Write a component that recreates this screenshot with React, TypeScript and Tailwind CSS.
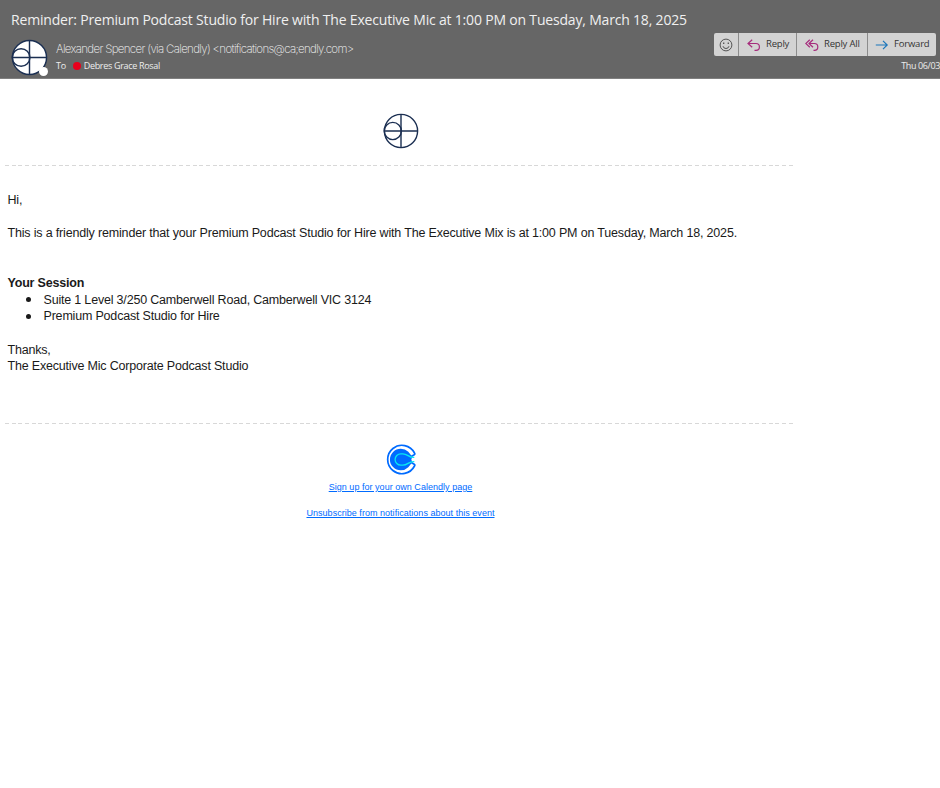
import React from "react";

interface LogoProps {
   className?: string;
   fill?: string;
}

function StudioLogo({ className, fill = "none" }: LogoProps) {
   return (
      <svg viewBox="0 0 36 36" className={className} fill="none" stroke="#1b2f52" strokeWidth="1.4">
         <circle cx="18" cy="18" r="16.6" fill={fill} />
         <circle cx="9.8" cy="18" r="8.6" />
         <path d="M18 1.5v33M1.5 18h33" />
      </svg>
   );
}

function CalendlyLogo() {
   return (
      <svg viewBox="1.2 0.5 32 32" className="size-8" fill="none">
         <path
            d="M27 13.2L30.4 11.3Q31.4 10.600 30.700 9.500A14.200 14.200 0 1 0 30.700 22.500Q31.400 21.400 30.400 20.700L27 18.800"
            stroke="#006bff"
            strokeWidth="1.700"
         />
         <path d="M24.500 8.300A10.800 10.800 0 1 0 24.500 23.700L28.500 18.800L27.500 16L28.500 13.200Z" fill="#006bff" />
         <path
            d="M30.500 13.900C25 14.500 24 10.300 19 10.300H17a5.700 5.700 0 0 0 0 11.400h2C24 21.700 25 17.500 30.500 18.100"
            stroke="#0ae8f0"
            strokeWidth="1.300"
         />
      </svg>
   );
}

function SmileIcon() {
   return (
      <svg viewBox="0 0 14 14" className="size-[14px]" fill="none" stroke="#555" strokeWidth="1">
         <circle cx="7" cy="7" r="5.9" />
         <path d="M4 8.2a3.1 3.1 0 0 0 6 0" />
         <path d="M4.700 4.500v1.400M9.300 4.500v1.400" strokeWidth="1.3" />
      </svg>
   );
}

function ReplyIcon() {
   return (
      <svg viewBox="0 0 14 12" className="h-3 w-[14px]" fill="none" stroke="#a62c7c" strokeWidth="1.2">
         <path d="M5.200 0.700L1 4.500l4.200 3.800M1 4.500h8a3.400 3.400 0 0 1 0 6.800H7.500" />
      </svg>
   );
}

function ReplyAllIcon() {
   return (
      <svg viewBox="0 0 14 12" className="h-3 w-[14px]" fill="none" stroke="#a62c7c" strokeWidth="1.2">
         <path d="M4.800 0.700L0.800 4.500l4 3.800M8 0.700L4 4.500l4 3.800M4 4.500h5.400a3.400 3.400 0 0 1 0 6.800H8.500" />
      </svg>
   );
}

function ForwardIcon() {
   return (
      <svg viewBox="0 0 14 12" className="h-3 w-[14px]" fill="none" stroke="#1b76bb" strokeWidth="1.2">
         <path d="M0.800 6h11.400M8 1.800L12.200 6L8 10.200" />
      </svg>
   );
}

function Divider() {
   return (
      <div className="ml-[5px] h-px w-[790px] bg-[repeating-linear-gradient(90deg,#d8d8d8_0_4px,transparent_4px_6.7px)]" />
   );
}

export default function App() {
   return (
      <div className="h-[788px] w-[940px] overflow-hidden bg-white font-['Liberation_Sans',sans-serif] text-[#1a1a1a]">
         {/* Message header */}
         <header className="h-[79px] overflow-hidden border-b border-[#808080] bg-[#666666] font-['Open_Sans',sans-serif]">
            <h1 className="ml-[11px] mt-[10px] h-[19px] whitespace-nowrap text-[14px] leading-[19px] tracking-[-0.186px] text-[#f0f0f0]">
               <span>Reminder: Premium Podcast Studio for Hire with The Executive Mic at 1:00 PM on Tuesday, March 18, 2025</span>
            </h1>
            <div className="flex">
               <div className="relative ml-[11px] mt-[10px] size-[37px] shrink-0">
                  <StudioLogo className="size-[37px]" fill="white" />
                  <span className="absolute bottom-0 right-0 size-[9px] rounded-full bg-white" />
               </div>
               <div className="ml-2 mt-3 whitespace-nowrap">
                  <p className="h-4 font-['Inter',sans-serif] text-[11.5px] font-extralight leading-4 tracking-[-0.67px] text-[#f5f5f5]">
                     <span>Alexander Spencer (via Calendly) &lt;notifications@ca;endly.com&gt;</span>
                  </p>
                  <p className="mt-0.5 flex h-[14px] items-center text-[9px] leading-[14px] tracking-[-0.32px] text-[#ededed]">
                     <span>To</span>
                     <span className="ml-[7px] mr-[3px] size-2 rounded-full bg-[#e8001c]" />
                     <span>Debres Grace Rosal</span>
                  </p>
               </div>
               <div className="ml-auto mt-1">
                  <div className="mr-1 flex h-[23px] divide-x divide-[#8c8c8c] rounded-xs bg-[#d3d3d3] text-[9.5px] tracking-[-0.2px] text-[#333]">
                     <button className="flex w-[25px] items-center justify-center">
                        <SmileIcon />
                     </button>
                     <button className="flex w-[58px] items-center gap-[5px] pl-2">
                        <ReplyIcon />
                        <span>Reply</span>
                     </button>
                     <button className="flex w-[71px] items-center gap-[5px] whitespace-nowrap pl-2">
                        <ReplyAllIcon />
                        <span>Reply All</span>
                     </button>
                     <button className="flex w-[68px] items-center gap-[5px] pl-[7px]">
                        <ForwardIcon />
                        <span>Forward</span>
                     </button>
                  </div>
                  <p className="mt-[3px] whitespace-nowrap text-right text-[9px] leading-[14px] tracking-[-0.38px] text-[#ededed]">
                     <span>Thu 06/03</span>
                  </p>
               </div>
            </div>
         </header>

         {/* Message body */}
         <main className="w-[801px] text-[12.5px] leading-[16.67px] tracking-[-0.19px]">
            <div className="flex h-[86px] justify-center pt-[34px]">
               <StudioLogo className="size-9" />
            </div>
            <Divider />
            <div className="ml-[7.5px] mt-[25.6px] whitespace-nowrap">
               <p>
                  <span>Hi,</span>
               </p>
               <p className="mt-[16.67px] tracking-[-0.173px]">
                  <span>
                     This is a friendly reminder that your Premium Podcast Studio for Hire with The Executive Mix is at
                     1:00 PM on Tuesday, March 18, 2025.
                  </span>
               </p>
               <h2 className="mt-[33.33px] font-bold">
                  <span>Your Session</span>
               </h2>
               <ul>
                  <li className="flex items-center">
                     <span className="ml-[18px] mr-[13px] size-[5px] rounded-full bg-[#1a1a1a]" />
                     <span>Suite 1 Level 3/250 Camberwell Road, Camberwell VIC 3124</span>
                  </li>
                  <li className="flex items-center">
                     <span className="ml-[18px] mr-[13px] size-[5px] rounded-full bg-[#1a1a1a]" />
                     <span>Premium Podcast Studio for Hire</span>
                  </li>
               </ul>
               <p className="mt-[16.67px]">
                  <span>Thanks,</span>
               </p>
               <p>
                  <span>The Executive Mic Corporate Podcast Studio</span>
               </p>
            </div>
            <div className="h-12" />
            <Divider />
            <div className="flex flex-col items-center pt-5 text-[9px] leading-[14px] tracking-[0.03px] text-[#006bff]">
               <CalendlyLogo />
               <a className="mt-1 underline">Sign up for your own Calendly page</a>
               <a className="mt-3 underline">Unsubscribe from notifications about this event</a>
            </div>
         </main>
      </div>
   );
}
